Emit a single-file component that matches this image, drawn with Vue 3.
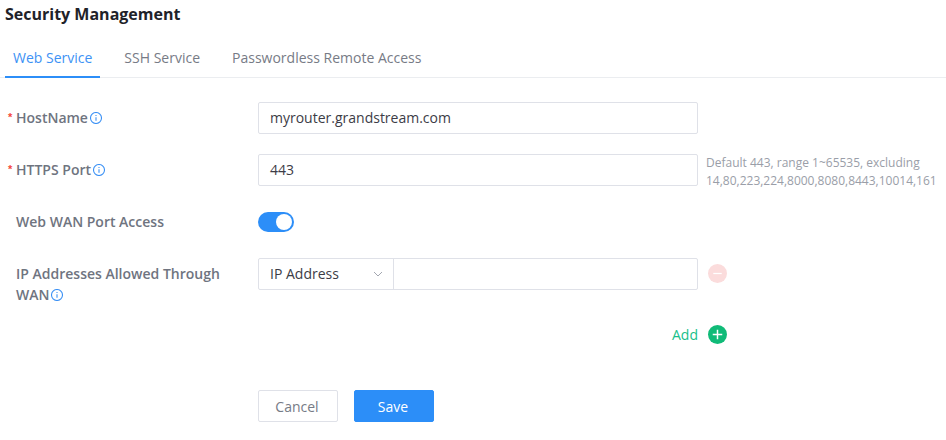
<script setup>
const tabs = ['Web Service', 'SSH Service', 'Passwordless Remote Access']
</script>

<template>
  <div class="page">
    <h1 class="title">Security Management</h1>
    <div class="tabs">
      <div v-for="(t, i) in tabs" :key="t" class="tab" :class="{ active: i === 0 }">{{ t }}</div>
    </div>
    <form class="form" @submit.prevent>
      <div class="row">
        <label class="label req"><span class="star">*</span><span>HostName<svg class="info" viewBox="0 0 12 12"><circle cx="6" cy="6" r="5.5" /><path d="M6 5.2v3.6M6 3v1.1" /></svg></span></label>
        <div class="input">myrouter.grandstream.com</div>
      </div>
      <div class="row">
        <label class="label req"><span class="star">*</span><span>HTTPS Port<svg class="info" viewBox="0 0 12 12"><circle cx="6" cy="6" r="5.5" /><path d="M6 5.2v3.6M6 3v1.1" /></svg></span></label>
        <div class="input">443</div>
        <div class="hint">Default 443, range 1~65535, excluding<br />14,80,223,224,8000,8080,8443,10014,161</div>
      </div>
      <div class="row">
        <label class="label">Web WAN Port Access</label>
        <div class="switch"><span class="knob"></span></div>
      </div>
      <div class="row ip-row">
        <label class="label">IP Addresses Allowed Through<br />WAN<svg class="info" viewBox="0 0 12 12"><circle cx="6" cy="6" r="5.5" /><path d="M6 5.2v3.6M6 3v1.1" /></svg></label>
        <div class="group">
          <div class="select">IP Address
            <svg class="chev" viewBox="0 0 10 6"><path d="M1 1l4 4 4-4" /></svg>
          </div>
          <div class="group-input"></div>
        </div>
        <svg class="round" viewBox="0 0 18 18"><circle cx="9" cy="9" r="9" fill="#fbdcdc" /><path d="M5 9h8" stroke="#fff" stroke-width="1.2" /></svg>
      </div>
      <div class="add-row">
        <span class="add">Add</span>
        <svg class="round" viewBox="0 0 18 18"><circle cx="9" cy="9" r="9" fill="#10bb78" /><path d="M9 4.5v9M4.5 9h9" stroke="#fff" stroke-width="1.4" /></svg>
      </div>
      <div class="actions">
        <button class="btn" type="button">Cancel</button>
        <button class="btn primary" type="submit">Save</button>
      </div>
    </form>
  </div>
</template>

<style scoped>
.page {
  width: 946px;
  height: 440px;
  overflow: hidden;
  background: #fff;
  font-family: "Open Sans", "Noto Sans", sans-serif;
  font-size: 14px;
  color: #3c3c46;
  box-sizing: border-box;
}
.title {
  margin: 0;
  padding: 3px 0 0 5px;
  font-size: 16px;
  line-height: 22px;
  font-weight: 700;
  color: #1f2229;
}
.tabs {
  display: flex;
  margin-top: 17px;
  height: 35px;
  padding-left: 5px;
  border-bottom: 1px solid #ebedf0;
}
.tab {
  padding: 0 8px;
  margin-right: 16px;
  line-height: 31px;
  height: 35px;
  color: #777b86;
}
.tab.active {
  color: #3d92f5;
  box-shadow: inset 0 -2px 0 #2c8ef8;
  height: 36px;
}
.form {
  padding-top: 24px;
}
.row {
  display: flex;
  align-items: flex-start;
  margin-bottom: 20px;
  min-height: 32px;
}
.label {
  box-sizing: border-box;
  width: 258px;
  flex: none;
  padding: 5px 0 0 16px;
  line-height: 21px;
  font-weight: 600;
  color: #6f7480;
}
.label.req {
  display: flex;
  padding-left: 8px;
}
.star {
  width: 8px;
  color: #f5483b;
  font-family: "Liberation Sans", sans-serif;
  font-size: 11px;
  line-height: 21px;
  font-weight: 700;
}
.info {
  width: 12px;
  height: 12px;
  margin-left: 2px;
  vertical-align: -1px;
  fill: none;
  stroke: #3d92f5;
  stroke-width: 1.1;
}
.input {
  box-sizing: border-box;
  width: 440px;
  height: 32px;
  flex: none;
  padding: 0 11px;
  line-height: 30px;
  border: 1px solid #dfe1e8;
  border-radius: 2px;
}
.hint {
  margin: 0 -2px -4px 8px;
  font-size: 12px;
  line-height: 18px;
  white-space: nowrap;
  color: #9a9ea8;
}
.switch {
  box-sizing: border-box;
  width: 36px;
  height: 20px;
  margin-top: 6px;
  border-radius: 10px;
  background: #2c8ef8;
  display: flex;
  justify-content: flex-end;
  align-items: center;
  padding-right: 2px;
}
.knob {
  width: 16px;
  height: 16px;
  border-radius: 50%;
  background: #fff;
}
.ip-row {
  margin-bottom: 0;
  height: 64px;
}
.group {
  display: flex;
  box-sizing: border-box;
  width: 440px;
  height: 32px;
  flex: none;
  border: 1px solid #dfe1e8;
  border-radius: 2px;
}
.select {
  box-sizing: border-box;
  width: 135px;
  padding-left: 11px;
  line-height: 30px;
  border-right: 1px solid #dfe1e8;
  display: flex;
  justify-content: space-between;
  align-items: center;
  padding-right: 10px;
}
.chev {
  width: 10px;
  height: 6px;
  fill: none;
  stroke: #a3a7b0;
  stroke-width: 1;
}
.group-input {
  flex: 1;
}
.round {
  width: 19px;
  height: 19px;
  flex: none;
  margin: 6px 0 0 10px;
}
.add-row {
  display: flex;
  align-items: center;
  margin-left: 672px;
  height: 24px;
}
.add-row .round {
  margin: 0 0 0 10px;
}
.add {
  color: #19c08a;
}
.actions {
  display: flex;
  gap: 16px;
  margin: 44px 0 0 258px;
}
.btn {
  box-sizing: border-box;
  width: 80px;
  height: 32px;
  border: 1px solid #dfe1e8;
  border-radius: 2px;
  background: #fff;
  color: #777b86;
  font: inherit;
  padding: 0 2px 0 0;
}
.btn.primary {
  border-color: #2c8ef8;
  background: #2c8ef8;
  color: #fff;
}
</style>
